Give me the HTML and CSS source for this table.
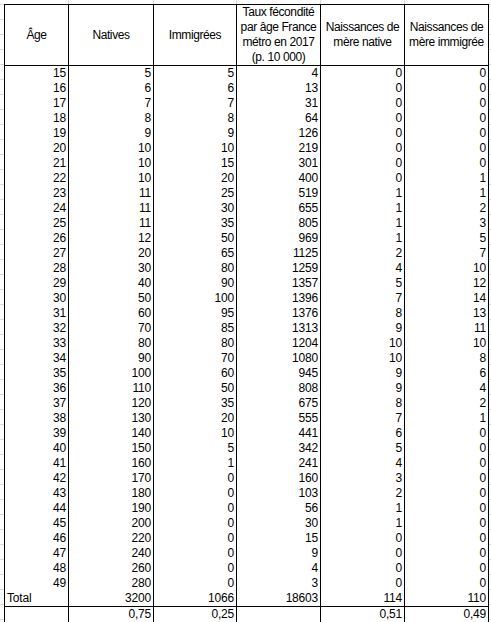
FILE: index.html
```html
<!DOCTYPE html>
<html lang="fr">
<head>
<meta charset="utf-8">
<title>Naissances</title>
<link rel="stylesheet" href="styles.css">
</head>
<body>
<div class="sheet">
<table class="grid">
<colgroup>
<col class="c1"><col class="c2"><col class="c3"><col class="c4"><col class="c5"><col class="c6">
</colgroup>
<thead>
<tr class="head">
<th>Âge</th><th>Natives</th><th>Immigrées</th>
<th>Taux fécondité<br>par âge France<br>métro en 2017<br>(p. 10 000)</th>
<th>Naissances de<br>mère native</th><th>Naissances de<br>mère immigrée</th>
</tr>
</thead>
<tbody>
<tr><td>15</td><td>5</td><td>5</td><td>4</td><td>0</td><td>0</td></tr>
<tr><td>16</td><td>6</td><td>6</td><td>13</td><td>0</td><td>0</td></tr>
<tr><td>17</td><td>7</td><td>7</td><td>31</td><td>0</td><td>0</td></tr>
<tr><td>18</td><td>8</td><td>8</td><td>64</td><td>0</td><td>0</td></tr>
<tr><td>19</td><td>9</td><td>9</td><td>126</td><td>0</td><td>0</td></tr>
<tr><td>20</td><td>10</td><td>10</td><td>219</td><td>0</td><td>0</td></tr>
<tr><td>21</td><td>10</td><td>15</td><td>301</td><td>0</td><td>0</td></tr>
<tr><td>22</td><td>10</td><td>20</td><td>400</td><td>0</td><td>1</td></tr>
<tr><td>23</td><td>11</td><td>25</td><td>519</td><td>1</td><td>1</td></tr>
<tr><td>24</td><td>11</td><td>30</td><td>655</td><td>1</td><td>2</td></tr>
<tr><td>25</td><td>11</td><td>35</td><td>805</td><td>1</td><td>3</td></tr>
<tr><td>26</td><td>12</td><td>50</td><td>969</td><td>1</td><td>5</td></tr>
<tr><td>27</td><td>20</td><td>65</td><td>1125</td><td>2</td><td>7</td></tr>
<tr><td>28</td><td>30</td><td>80</td><td>1259</td><td>4</td><td>10</td></tr>
<tr><td>29</td><td>40</td><td>90</td><td>1357</td><td>5</td><td>12</td></tr>
<tr><td>30</td><td>50</td><td>100</td><td>1396</td><td>7</td><td>14</td></tr>
<tr><td>31</td><td>60</td><td>95</td><td>1376</td><td>8</td><td>13</td></tr>
<tr><td>32</td><td>70</td><td>85</td><td>1313</td><td>9</td><td>11</td></tr>
<tr><td>33</td><td>80</td><td>80</td><td>1204</td><td>10</td><td>10</td></tr>
<tr><td>34</td><td>90</td><td>70</td><td>1080</td><td>10</td><td>8</td></tr>
<tr><td>35</td><td>100</td><td>60</td><td>945</td><td>9</td><td>6</td></tr>
<tr><td>36</td><td>110</td><td>50</td><td>808</td><td>9</td><td>4</td></tr>
<tr><td>37</td><td>120</td><td>35</td><td>675</td><td>8</td><td>2</td></tr>
<tr><td>38</td><td>130</td><td>20</td><td>555</td><td>7</td><td>1</td></tr>
<tr><td>39</td><td>140</td><td>10</td><td>441</td><td>6</td><td>0</td></tr>
<tr><td>40</td><td>150</td><td>5</td><td>342</td><td>5</td><td>0</td></tr>
<tr><td>41</td><td>160</td><td>1</td><td>241</td><td>4</td><td>0</td></tr>
<tr><td>42</td><td>170</td><td>0</td><td>160</td><td>3</td><td>0</td></tr>
<tr><td>43</td><td>180</td><td>0</td><td>103</td><td>2</td><td>0</td></tr>
<tr><td>44</td><td>190</td><td>0</td><td>56</td><td>1</td><td>0</td></tr>
<tr><td>45</td><td>200</td><td>0</td><td>30</td><td>1</td><td>0</td></tr>
<tr><td>46</td><td>220</td><td>0</td><td>15</td><td>0</td><td>0</td></tr>
<tr><td>47</td><td>240</td><td>0</td><td>9</td><td>0</td><td>0</td></tr>
<tr><td>48</td><td>260</td><td>0</td><td>4</td><td>0</td><td>0</td></tr>
<tr><td>49</td><td>280</td><td>0</td><td>3</td><td>0</td><td>0</td></tr>
<tr><td class="label">Total</td><td>3200</td><td>1066</td><td>18603</td><td>114</td><td>110</td></tr>
<tr class="ratio"><td></td><td>0,75</td><td>0,25</td><td></td><td>0,51</td><td>0,49</td></tr>
</tbody>
</table>
</div>
</body>
</html>
```
FILE: styles.css
```css
html, body {
  margin: 0;
  padding: 0;
  background: #fff;
}

.sheet {
  width: 491px;
  height: 622px;
  overflow: hidden;
  box-sizing: border-box;
  padding: 4px 0 0 4px;
  background-color: #fff;
  background-image:
    linear-gradient(to right, transparent 68px, #dadada 68px, #dadada 69px, transparent 69px),
    linear-gradient(to right, transparent 153px, #dadada 153px, #dadada 154px, transparent 154px),
    linear-gradient(to right, transparent 236px, #dadada 236px, #dadada 237px, transparent 237px),
    linear-gradient(to right, transparent 320px, #dadada 320px, #dadada 321px, transparent 321px),
    linear-gradient(to right, transparent 404px, #dadada 404px, #dadada 405px, transparent 405px),
    repeating-linear-gradient(to bottom, transparent 0, transparent 4px, #dadada 4px, #dadada 5px, transparent 5px, transparent 15px);
}

.grid {
  border-collapse: collapse;
  table-layout: fixed;
  width: 485px;
  font-family: "Liberation Sans", Arial, sans-serif;
  font-size: 12px;
  letter-spacing: -0.2px;
  color: #000;
  background: #fff;
}

.c1 { width: 64px; }
.c2 { width: 85px; }
.c3 { width: 83px; }
.c4 { width: 84px; }
.c5 { width: 84px; }
.c6 { width: 84px; }

.grid th,
.grid td {
  border-left: 1px solid #000;
  border-right: 1px solid #000;
  padding: 0 2px;
  overflow: hidden;
  white-space: nowrap;
}

.grid th {
  font-weight: normal;
  text-align: center;
  vertical-align: middle;
  height: 60px;
  line-height: 15px;
  letter-spacing: -0.4px;
  border-top: 1px solid #000;
  border-bottom: 1px solid #000;
  box-sizing: border-box;
  padding: 0;
}

.grid td {
  text-align: right;
  height: 15px;
  line-height: 15px;
  box-sizing: border-box;
}

.grid td.label {
  text-align: left;
}

.ratio td {
  border-top: 1px solid #000;
  border-bottom: 1px solid #000;
  height: 16px;
}
```
